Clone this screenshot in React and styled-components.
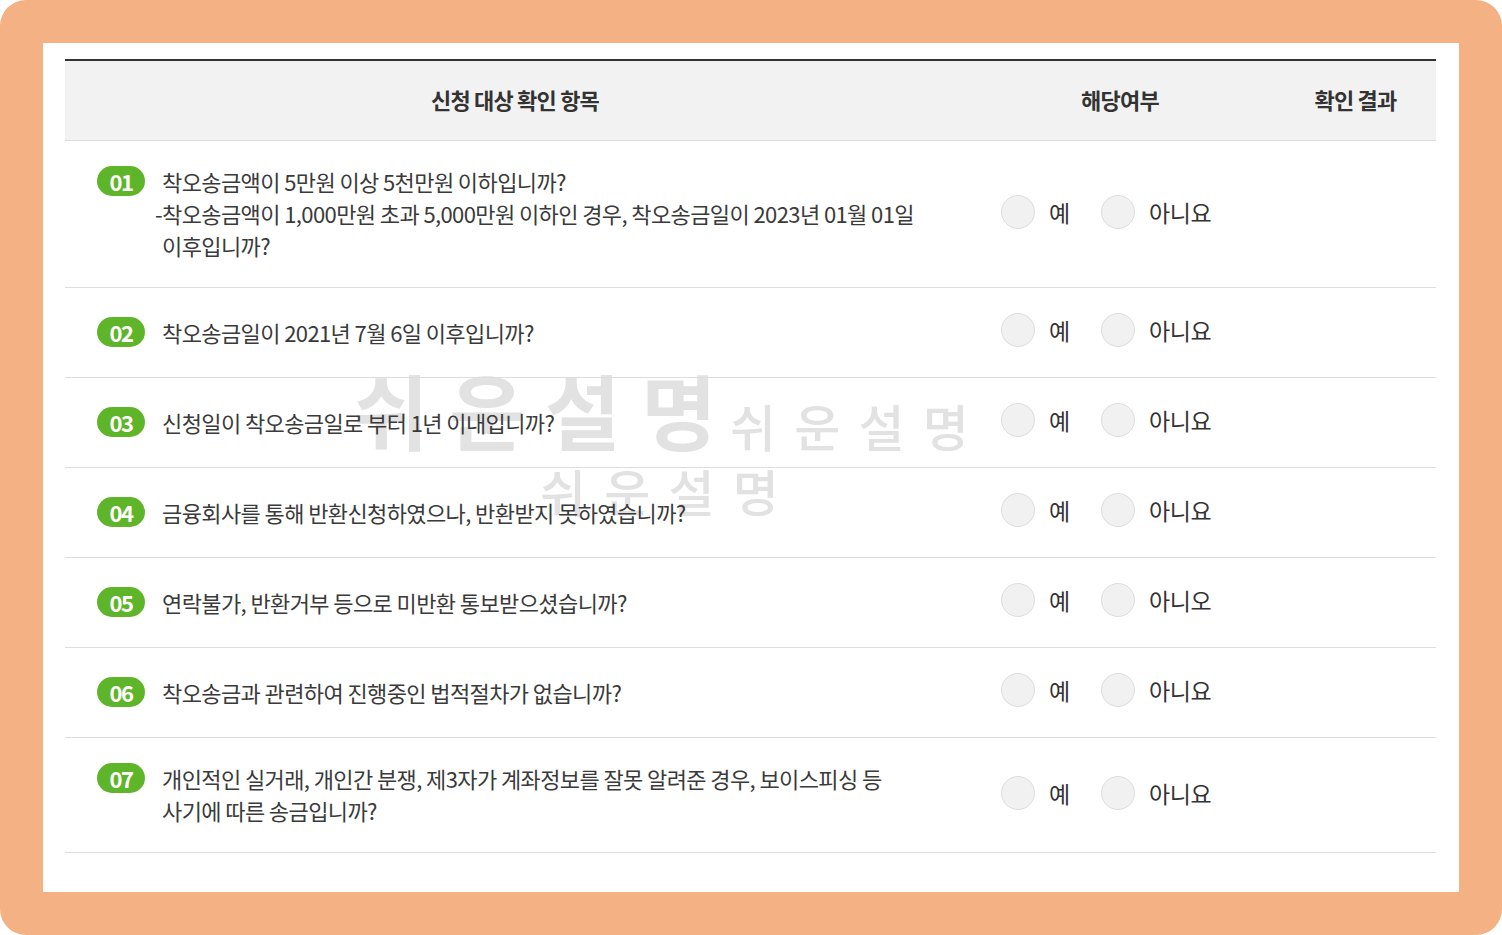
import React from "react";
import styled, { createGlobalStyle } from "styled-components";

const GlobalStyle = createGlobalStyle`
  html, body {
    margin: 0;
    padding: 0;
    background: #ffffff;
  }
  body {
    font-family: "Noto Sans CJK KR", "Noto Sans", sans-serif;
    color: #333333;
  }
`;

const questions = [
  {
    no: "01",
    lines: [
      "착오송금액이 5만원 이상 5천만원 이하입니까?",
      "-착오송금액이 1,000만원 초과 5,000만원 이하인 경우, 착오송금일이 2023년 01월 01일",
      "이후입니까?",
    ],
    no2: "아니요",
  },
  { no: "02", lines: ["착오송금일이 2021년 7월 6일 이후입니까?"], no2: "아니요" },
  { no: "03", lines: ["신청일이 착오송금일로 부터 1년 이내입니까?"], no2: "아니요" },
  { no: "04", lines: ["금융회사를 통해 반환신청하였으나, 반환받지 못하였습니까?"], no2: "아니요" },
  { no: "05", lines: ["연락불가, 반환거부 등으로 미반환 통보받으셨습니까?"], no2: "아니오" },
  { no: "06", lines: ["착오송금과 관련하여 진행중인 법적절차가 없습니까?"], no2: "아니요" },
  {
    no: "07",
    lines: [
      "개인적인 실거래, 개인간 분쟁, 제3자가 계좌정보를 잘못 알려준 경우, 보이스피싱 등",
      "사기에 따른 송금입니까?",
    ],
    no2: "아니요",
  },
];

export default function App() {
  return (
    <>
      <GlobalStyle />
      <Frame>
        <Panel>
          <Watermark>
            <BigMark>쉬 운 설 명</BigMark>
            <SmallMark $left={687} $top={357}>쉬 운 설 명</SmallMark>
            <SmallMark $left={497} $top={422}>쉬 운 설 명</SmallMark>
          </Watermark>
          <Table>
            <HeadRow>
              <HeadCell>신청 대상 확인 항목</HeadCell>
              <HeadCell>해당여부</HeadCell>
              <HeadCell>확인 결과</HeadCell>
            </HeadRow>
            {questions.map((q) => (
              <Row key={q.no}>
                <Question>
                  <Badge>{q.no}</Badge>
                  <QText>
                    {q.lines.map((line, i) => (
                      <Line key={i} $indent={i > 0 && line.startsWith("-")}>
                        {line}
                      </Line>
                    ))}
                  </QText>
                </Question>
                <Choices>
                  <Choice>
                    <Radio />
                    <ChoiceLabel>예</ChoiceLabel>
                  </Choice>
                  <Choice>
                    <Radio />
                    <ChoiceLabel>{q.no2}</ChoiceLabel>
                  </Choice>
                </Choices>
                <Result />
              </Row>
            ))}
          </Table>
        </Panel>
      </Frame>
    </>
  );
}

const Frame = styled.div`
  width: 1502px;
  height: 935px;
  box-sizing: border-box;
  padding: 43px;
  background: #f4b183;
  border-radius: 26px;
`;

const Panel = styled.div`
  position: relative;
  height: 100%;
  box-sizing: border-box;
  padding: 16px 23px 0 22px;
  background: #ffffff;
`;

const Watermark = styled.div`
  position: absolute;
  inset: 0;
  pointer-events: none;
  z-index: 0;
  color: #e2e2e2;
`;

const BigMark = styled.div`
  position: absolute;
  left: 310px;
  top: 325px;
  font-size: 82px;
  font-weight: 700;
  line-height: 1;
  white-space: nowrap;
  letter-spacing: 1px;
`;

const SmallMark = styled.div`
  position: absolute;
  left: ${(p) => p.$left}px;
  top: ${(p) => p.$top}px;
  font-size: 50px;
  font-weight: 500;
  line-height: 1;
  white-space: nowrap;
  letter-spacing: 3.5px;
`;

const Table = styled.div`
  position: relative;
  z-index: 1;
  border-top: 2px solid #333333;
`;

const HeadRow = styled.div`
  display: grid;
  grid-template-columns: 900px 310px 1fr;
  height: 79px;
  align-items: center;
  background: #f2f2f2;
  border-bottom: 1px solid #dddddd;
`;

const HeadCell = styled.div`
  text-align: center;
  font-size: 22px;
  font-weight: 700;
  letter-spacing: -0.8px;
  color: #333333;
  margin-top: -3px;
`;

const Row = styled.div`
  display: grid;
  grid-template-columns: 900px 310px 1fr;
  align-items: center;
  min-height: 89px;
  border-bottom: 1px solid #dddddd;
`;

const Question = styled.div`
  display: flex;
  align-items: flex-start;
  gap: 17px;
  padding: 24px 0 26px 32px;
`;

const Badge = styled.span`
  flex: none;
  display: flex;
  align-items: center;
  justify-content: center;
  width: 48px;
  height: 30px;
  margin-top: 1px;
  border-radius: 15px;
  background: #5fb52a;
  color: #ffffff;
  font-size: 22px;
  font-weight: 700;
  letter-spacing: -1.5px;
  line-height: 1;
`;

const QText = styled.div`
  font-size: 22px;
  line-height: 32px;
  letter-spacing: -0.6px;
  color: #3a3a3a;
`;

const Line = styled.div`
  white-space: nowrap;
  margin-left: ${(p) => (p.$indent ? "-7px" : "0")};
`;

const Choices = styled.div`
  display: flex;
  align-items: center;
  gap: 31px;
  padding-left: 36px;
  margin-top: -5px;
`;

const Choice = styled.label`
  display: flex;
  align-items: center;
  gap: 14px;
`;

const Radio = styled.span`
  display: block;
  width: 34px;
  height: 34px;
  box-sizing: border-box;
  border-radius: 50%;
  background: #f1f1f1;
  border: 1px solid #dddddd;
`;

const ChoiceLabel = styled.span`
  font-size: 23px;
  color: #333333;
  letter-spacing: -0.3px;
`;

const Result = styled.div``;
